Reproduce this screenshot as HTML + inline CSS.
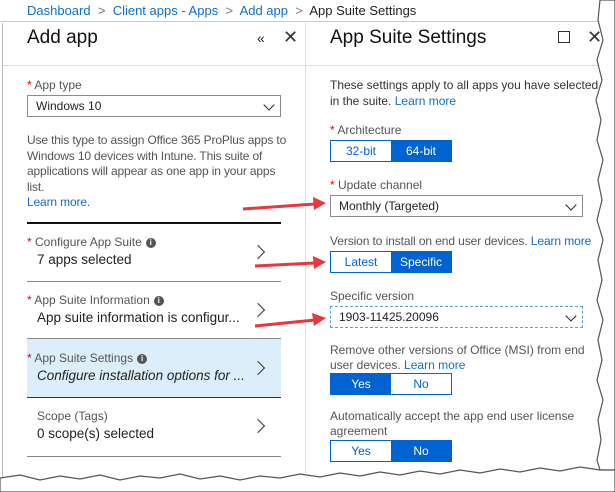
<!DOCTYPE html>
<html><head><style>
*{margin:0;padding:0;box-sizing:border-box}
body{width:615px;height:492px;background:#fff;font-family:"Liberation Sans",sans-serif;position:relative;overflow:hidden;color:#222}
.a{position:absolute;white-space:nowrap}
.lk{color:#0f6fc6}
.lbl{color:#555;font-size:12px}
.st{color:#e00}
.sel{position:absolute;border:1px solid #8a8a8a;height:22px;font-size:12px;padding:3px 8px;background:#fff}
.chev{position:absolute;right:7px;top:5px;width:8px;height:8px;border-right:1.5px solid #222;border-bottom:1.5px solid #222;transform:rotate(45deg)}
.tg{position:absolute;display:flex;border:1px solid #0063d1;height:22px;font-size:12px}
.tg div{width:60px;text-align:center;line-height:20px;color:#0063d1;background:#fff}
.tg div.on{background:#0063d1;color:#fff}
.row{position:absolute;left:27px;width:254px;border-bottom:1.5px solid #888}
.arr{position:absolute;right:18px;width:10px;height:10px;border-right:1.5px solid #333;border-top:1.5px solid #333;transform:rotate(45deg)}
.i{display:inline-block;width:10px;height:10px;border-radius:50%;background:#555;color:#fff;font-size:8px;text-align:center;line-height:10px;font-weight:bold;vertical-align:1px;margin-left:4px}
</style></head><body>
<div class="a" style="left:0;top:0;width:600px;height:22px;border-bottom:1px solid #ccc"></div>
<div class="a" style="left:27px;top:3px;font-size:13px"><span class="lk">Dashboard</span> <span style="color:#777">&nbsp;&gt;&nbsp;</span> <span class="lk">Client apps - Apps</span> <span style="color:#777">&nbsp;&gt;&nbsp;</span> <span class="lk">Add app</span> <span style="color:#777">&nbsp;&gt;&nbsp;</span> App Suite Settings</div>
<div class="a" style="left:2px;top:23px;width:1px;height:455px;background:#bbb"></div>
<div class="a" style="left:305px;top:23px;width:1px;height:455px;background:#ddd"></div>
<div class="a" style="left:3px;top:65px;width:597px;height:1px;background:#ddd"></div>
<div class="a" style="left:27px;top:27px;font-size:19px;color:#111">Add app</div>
<div class="a" style="left:257px;top:30px;font-size:14px">«</div>
<div class="a" style="left:283px;top:27px;font-size:18px;color:#333">✕</div>
<div class="a" style="left:330px;top:27px;font-size:19px;color:#111">App Suite Settings</div>
<div class="a" style="left:558px;top:31px;width:12px;height:12px;border:1.3px solid #333"></div>
<div class="a" style="left:587px;top:27px;font-size:18px;color:#333">✕</div>

<div class="a lbl" style="left:27px;top:78px"><span class="st">*</span> App type</div>
<div class="sel" style="left:27px;top:95px;width:254px">Windows 10<div class="chev"></div></div>
<div class="a" style="left:27px;top:133px;font-size:12px;color:#555;line-height:15.5px;white-space:normal;width:262px;letter-spacing:-0.15px">Use this type to assign Office 365 ProPlus apps to Windows 10 devices with Intune. This suite of applications will appear as one app in your apps list.<br><span class="lk">Learn more.</span></div>
<div class="a" style="left:27px;top:222px;width:254px;height:1.5px;background:#111"></div>

<div class="row" style="top:223px;height:59px"><div class="a lbl" style="left:0;top:12px"><span class="st">*</span> Configure App Suite<span class="i">i</span></div><div class="a" style="left:10px;top:29px;font-size:13.5px">7 apps selected</div><div class="arr" style="top:24px"></div></div>
<div class="row" style="top:282px;height:57px"><div class="a lbl" style="left:0;top:11px"><span class="st">*</span> App Suite Information<span class="i">i</span></div><div class="a" style="left:10px;top:28px;font-size:13.5px">App suite information is configur...</div><div class="arr" style="top:23px"></div></div>
<div class="row" style="top:339px;height:59px;background:#ddeefb;border-bottom-color:#333"><div class="a lbl" style="left:0;top:12px"><span class="st">*</span> App Suite Settings<span class="i">i</span></div><div class="a" style="left:10px;top:29px;font-size:13.5px;font-style:italic">Configure installation options for ...</div><div class="arr" style="top:24px"></div></div>
<div class="row" style="top:398px;height:59px"><div class="a lbl" style="left:10px;top:11px">Scope (Tags)</div><div class="a" style="left:10px;top:28px;font-size:13.5px">0 scope(s) selected</div><div class="arr" style="top:23px"></div></div>

<div class="a" style="left:330px;top:78px;font-size:12px;color:#333;line-height:15.5px">These settings apply to all apps you have selected<br>in the suite. <span class="lk">Learn more</span></div>
<div class="a lbl" style="left:330px;top:123px"><span class="st">*</span> Architecture</div>
<div class="tg" style="left:330px;top:140px"><div>32-bit</div><div class="on">64-bit</div></div>
<div class="a lbl" style="left:330px;top:178px"><span class="st">*</span> Update channel</div>
<div class="sel" style="left:330px;top:195px;width:253px">Monthly (Targeted)<div class="chev"></div></div>
<div class="a lbl" style="left:330px;top:234px;letter-spacing:-0.1px">Version to install on end user devices. <span class="lk">Learn more</span></div>
<div class="tg" style="left:330px;top:251px"><div>Latest</div><div class="on">Specific</div></div>
<div class="a lbl" style="left:330px;top:289px">Specific version</div>
<div class="sel" style="left:330px;top:306px;width:253px;border:1px dashed #5aa0e0">1903-11425.20096<div class="chev"></div></div>
<div class="a lbl" style="left:330px;top:343px;line-height:15px">Remove other versions of Office (MSI) from end<br>user devices. <span class="lk">Learn more</span></div>
<div class="tg" style="left:330px;top:373px"><div class="on">Yes</div><div>No</div></div>
<div class="a lbl" style="left:330px;top:409px;line-height:15px">Automatically accept the app end user license<br>agreement</div>
<div class="tg" style="left:330px;top:440px"><div>Yes</div><div class="on">No</div></div>

<svg class="a" style="left:0;top:0" width="615" height="492">
<g stroke="#e8383d" stroke-width="3" fill="#e8383d">
<line x1="243" y1="209" x2="315" y2="204"/><polygon points="326,203 313,197 314,210" stroke="none"/>
<line x1="255" y1="266" x2="315" y2="263"/><polygon points="326,262 313,256 314,269" stroke="none"/>
<line x1="255" y1="326" x2="315" y2="320"/><polygon points="326,318 312,313 314,326" stroke="none"/>
</g>
<path d="M600,0 L598,20 L603,40 L597,60 L602,80 L596,100 L601,120 L597,140 L603,160 L598,180 L602,200 L597,220 L603,240 L598,260 L602,280 L597,300 L603,320 L598,340 L602,360 L597,380 L603,400 L598,420 L601,440 L597,460 L600,470 L615,470 L615,0Z" fill="#fff" stroke="#555" stroke-width="1.2"/>
<path d="M0,478 L20,475 L40,480 L60,476 L80,479 L100,475 L120,480 L140,476 L160,478 L180,474 L200,479 L220,476 L240,480 L260,476 L280,478 L300,474 L320,477 L340,473 L360,476 L380,472 L400,475 L420,471 L440,474 L460,470 L480,473 L500,469 L520,472 L540,468 L560,471 L580,467 L600,470 L615,470 L615,492 L0,492Z" fill="#fff" stroke="#555" stroke-width="1.2"/>
</svg>
</body></html>
